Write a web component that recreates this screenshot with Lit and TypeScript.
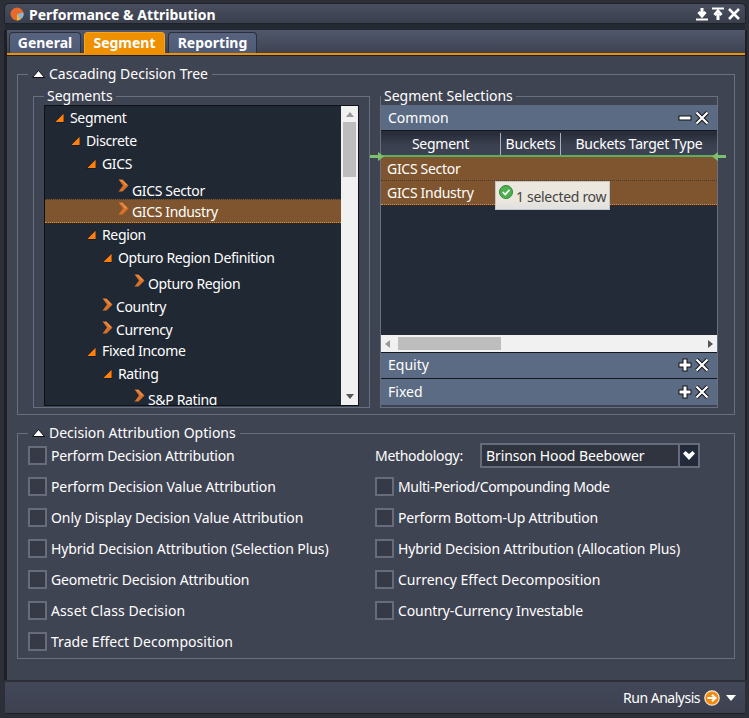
import { LitElement, html, css, svg } from "lit";
import { customElement } from "lit/decorators.js";

const tri = html`<svg class="ic" width="10" height="10" viewBox="0 0 10 10"><path d="M10 0V9.500H0Z" fill="#10151c"/><path d="M9.600 .8V8.900H1.300Z" fill="#ff7f10"/></svg>`;
const chev = html`<svg class="ic chev" width="11" height="13" viewBox="0 0 11 13"><path d="M.5 .5H4.500L10.500 6.500 4.500 12.500H.5L5 6.500Z" fill="#d9702a"/><path d="M1.500 1H4.300L9 6 7.500 6.500 4.500 2.500Z" fill="#f09a50"/></svg>`;
const legendTri = html`<svg class="lt" width="13" height="8" viewBox="0 0 13 8"><path d="M6.500 .5 12.500 7.500H.5Z" fill="#fff" stroke="#111"/></svg>`;
const glyph = (p: unknown) => html`<svg class="g" width="14" height="14" viewBox="0 0 14 14">${p}</svg>`;
const xIcon = glyph(svg`<path d="M1.500 1.500 12.500 12.500M12.500 1.500 1.500 12.500" stroke="#111" stroke-width="4"/><path d="M1.500 1.500 12.500 12.500M12.500 1.500 1.500 12.500" stroke="#fff" stroke-width="2.200"/>`);
const plusIcon = glyph(svg`<path d="M7 .5V13.500M.5 7H13.500" stroke="#111" stroke-width="5"/><path d="M7 1.500V12.500M1.500 7H12.500" stroke="#fff" stroke-width="3"/>`);
const minusIcon = glyph(svg`<path d="M.5 7H13.500" stroke="#111" stroke-width="5"/><path d="M1.500 7H12.500" stroke="#fff" stroke-width="3"/>`);

interface Row { t: string; x: number; leaf?: boolean; h: number; dy: number; sel?: boolean }
const rows: Row[] = [
  { t: "Segment", x: 9, h: 23, dy: 0 },
  { t: "Discrete", x: 25, h: 23, dy: 0 },
  { t: "GICS", x: 41, h: 24, dy: 0 },
  { t: "GICS Sector", x: 73, leaf: true, h: 23, dy: 3 },
  { t: "GICS Industry", x: 73, leaf: true, h: 24, dy: 1, sel: true },
  { t: "Region", x: 41, h: 23, dy: 0 },
  { t: "Opturo Region Definition", x: 57, h: 24, dy: 0 },
  { t: "Opturo Region", x: 89, leaf: true, h: 25, dy: 1 },
  { t: "Country", x: 57, leaf: true, h: 24, dy: 0 },
  { t: "Currency", x: 57, leaf: true, h: 22, dy: 0 },
  { t: "Fixed Income", x: 41, h: 21, dy: -1 },
  { t: "Rating", x: 57, h: 24, dy: 0 },
  { t: "S&P Rating", x: 89, leaf: true, h: 24, dy: 2 },
];
const left: [string, number][] = [["Perform Decision Attribution", -0.2], ["Perform Decision Value Attribution", -0.12], ["Only Display Decision Value Attribution", -0.1], ["Hybrid Decision Attribution (Selection Plus)", -0.09], ["Geometric Decision Attribution", -0.17], ["Asset Class Decision", 0.1], ["Trade Effect Decomposition", 0.04]];
const right: [string, number][] = [["Multi-Period/Compounding Mode", -0.35], ["Perform Bottom-Up Attribution", -0.2], ["Hybrid Decision Attribution (Allocation Plus)", -0.11], ["Currency Effect Decomposition", -0.03], ["Country-Currency Investable", -0.11]];

@customElement("app-root")
export class AppRoot extends LitElement {
  static styles = css`
    :host { display: block; width: 749px; height: 718px; background: #2c2f38; overflow: hidden;
      font-family: "Noto Sans", "DejaVu Sans", sans-serif; font-size: 14px; color: #fff; line-height: 16px; }
    * { box-sizing: border-box; }
    .win { margin: 0; padding: 3px 3px 0 4px; height: 718px; display: flex; flex-direction: column; }
    .title { height: 21px; flex: none; border: 1px solid #1f2229; border-radius: 5px 5px 0 0;
      background: linear-gradient(#4a4f60, #3a3f4d); display: flex; align-items: center; padding: 1px 3px 0 5px; font-weight: 700; }
    .title .name { margin-left: 5px; padding-top: 1px; }
    .tools { margin-left: auto; display: flex; gap: 2px; margin-right: 1px; }
    .gap { height: 6px; flex: none; background: #232931; margin: 0 1px; }
    .panel { height: 650px; flex: none; margin: 0 1px 0 3px; background: #3f4453; position: relative; display: flex; flex-direction: column; box-shadow: -3px 0 0 #1d1f24, 2px 0 0 #1d1f24; }
    .tabs { height: 25px; flex: none; display: flex; gap: 3px; padding: 2px 0 0 2px; background: linear-gradient(#51586c, #3f4453 95%); border-bottom: 2px solid #ee9000; box-shadow: 0 1px 0 #1d1f24; }
    .tab { height: 21px; border: 1px solid #2a2f3c; border-bottom: 0; border-radius: 4px 4px 0 0; background: linear-gradient(#56627e, #4f5c78); font-weight: 700; display: flex; align-items: center; justify-content: center; }
    .t1 { width: 72px; }
    .t2 { width: 81px; background: #ee9000; border-color: #f5a523; }
    .t3 { width: 89px; }
    fieldset { margin: 0; padding: 0; min-width: 0; border: 1px solid #667080; }
    legend { height: 16px; padding: 0 4px; line-height: 16px; display: flex; align-items: center; white-space: nowrap; }
    .lt { margin-right: 4px; }
    .outer { margin: 11px 10px 0 10px; height: 349px; }
    .outer > legend { margin-left: 10px; }
    .cols { display: flex; gap: 10px; padding: 6px 15px 0; }
    .segs { width: 337px; height: 320px; padding: 1px 10px 0; }
    .segs > legend { margin-left: 0; padding: 0 3px; }
    .sels { width: 338px; height: 320px; padding: 1px 0 0; }
    .sels > legend { margin-left: 0; padding: 0 3px; }
    .tree { width: 315px; height: 301px; border: 1px solid #0e1116; background: #1f2833; display: flex; overflow: hidden; letter-spacing: -0.35px; }
    .list { flex: 1; min-width: 0; overflow: hidden; }
    .row { display: flex; align-items: center; white-space: nowrap; }
    .row.sel { background: #7e552e; border-top: 1px dotted #4a3a2a; border-bottom: 1px dotted #f08a1e; }
    .row .ic { flex: none; margin-right: 6px; }
    .row .ic.chev { margin-right: 3px; margin-top: -5px; }
    .sb { width: 17px; flex: none; background: #f1f1f1; position: relative; display: flex; flex-direction: column; align-items: center; padding-top: 6px; }
    .thumb { width: 13px; height: 55px; background: #bdbdbd; margin-top: 5px; }
    .arr { width: 0; height: 0; border: 4px solid transparent; }
    .up { border-top: 0; border-bottom: 5px solid #9a9a9a; }
    .dn { border-bottom: 0; border-top: 5px solid #555; margin-top: auto; margin-bottom: 6px; }
    .bar { display: flex; align-items: center; padding: 0 8px 0 7px; background: #5b6b83; }
    .bar .g { flex: none; }
    .bar .btns { margin-left: auto; display: flex; gap: 3px; }
    .common { height: 26px; border-bottom: 1px solid #14171d; }
    .equity { height: 26px; border-top: 1px solid #14171d; padding-bottom: 2px; }
    .fixed { height: 27px; border-top: 1px solid #14171d; }
    .thead { height: 25px; display: grid; grid-template-columns: 119px 60px 1fr; background: linear-gradient(#282d3a 10%, #3b4050 55%, #3f4453); align-items: center; text-align: center; letter-spacing: -0.25px; }
    .thead div { height: 22px; line-height: 21px; }
    .thead div + div { border-left: 1px solid #aab0bc; }
    .tbody { height: 180px; background: #222b37; border-top: 2px solid #5fae5f; position: relative; margin-top: -1px; letter-spacing: -0.3px; }
    .tr { height: 24px; background: #7e552e; border-bottom: 1px dotted #4a3a2a; padding: 4px 0 0 6px; }
    .tr.last { border-bottom-color: #f08a1e; }
    .mk { position: absolute; top: -5px; }
    .tip { position: absolute; left: 114px; top: 24px; width: 115px; height: 29px; border: 1px solid #c6c6c6; background: linear-gradient(#ebe6de 70%, #dfe0e0); color: #444; display: flex; padding: 7px 0 0 20px; white-space: nowrap; letter-spacing: -0.3px; }
    .tip svg { position: absolute; left: 3px; top: 3px; }
    .hs { height: 17px; background: #f1f1f1; display: flex; align-items: center; padding: 0 4px; }
    .hs .th { width: 103px; height: 13px; background: #bdbdbd; margin-left: 8px; }
    .al { width: 0; height: 0; border: 4px solid transparent; border-left: 0; border-right: 5px solid #9a9a9a; }
    .ar { width: 0; height: 0; border: 4px solid transparent; border-right: 0; border-left: 5px solid #555; margin-left: auto; }
    .opts { margin: 10px 10px 0 10px; height: 234px; }
    .opts > legend { margin-left: 10px; }
    .grid { display: grid; grid-template-columns: 347px 1fr; padding-left: 10px; }
    .col { display: flex; flex-direction: column; }
    .cb { height: 31px; display: flex; gap: 4px; align-items: flex-start; padding-top: 5px; white-space: nowrap; }
    .cb i { width: 19px; height: 19px; flex: none; background: #353a46; border: 2px solid #666c7c; }
    .cb span { line-height: 18px; margin-top: 1px; }
    .meth { height: 31px; display: flex; padding-top: 2px; white-space: nowrap; }
    .meth label { width: 105px; padding-top: 5px; letter-spacing: -0.3px; }
    .sel-box { width: 220px; height: 25px; border: 2px solid #666c7c; background: #30343f; display: flex; align-items: center; padding-left: 4px; letter-spacing: -0.1px; }
    .sel-box span { flex: 1; }
    .sel-box b { width: 20px; height: 21px; border-left: 2px solid #666c7c; background: #232a3a; display: flex; align-items: center; justify-content: center; }
    .foot { height: 32px; flex: none; margin: 2px 1px 0 1px; background: linear-gradient(#434859, #3d4150); display: flex; align-items: center; justify-content: flex-end; padding-right: 9px; border-bottom: 1px solid #1d1f24; letter-spacing: -0.5px; }
    .foot .run { margin: 0 6px 0 4px; }
    .cap { width: 0; height: 0; border: 5px solid transparent; border-bottom: 0; border-top: 6px solid #fff; }
  `;

  render() {
    return html`<div class="win">
      <div class="title">
        <svg width="14" height="14" viewBox="0 0 14 14"><circle cx="7" cy="7" r="6.500" fill="#e8692a"/><path d="M7 7 13.400 5.500A6.500 6.500 0 0 1 10 12.700Z" fill="#8fb4cf"/><path d="M7 7 10 12.700A6.500 6.500 0 0 1 7 13.500Z" fill="#f2c230"/></svg>
        <span class="name">Performance &amp; Attribution</span>
        <div class="tools">
          ${glyph(svg`<path d="M7 1V7M3.500 5 7 9 10.500 5" stroke="#fff" stroke-width="3" fill="none"/><path d="M1 12.500H13" stroke="#fff" stroke-width="2"/>`)}
          ${glyph(svg`<path d="M1 1.500H13" stroke="#fff" stroke-width="2"/><path d="M7 13V7M3.500 8 7 4 10.500 8" stroke="#fff" stroke-width="3" fill="none"/>`)}
          ${glyph(svg`<path d="M2 2 12 12M12 2 2 12" stroke="#fff" stroke-width="2.500"/>`)}
        </div>
      </div>
      <div class="gap"></div>
      <div class="panel">
        <div class="tabs">
          <div class="tab t1">General</div><div class="tab t2">Segment</div><div class="tab t3">Reporting</div>
        </div>
        <fieldset class="outer">
          <legend>${legendTri}Cascading Decision Tree</legend>
          <div class="cols">
            <fieldset class="segs">
              <legend>Segments</legend>
              <div class="tree">
                <div class="list">
                  ${rows.map((r) => html`<div class="row ${r.sel ? "sel" : ""}" style="height:${r.h}px;padding-left:${r.x}px">
                    ${r.leaf ? chev : tri}<span style="margin-top:${r.dy * 2}px">${r.t}</span>
                  </div>`)}
                </div>
                <div class="sb"><div class="arr up"></div><div class="thumb"></div><div class="arr dn"></div></div>
              </div>
            </fieldset>
            <fieldset class="sels">
              <legend>Segment Selections</legend>
              <div class="bar common">Common<span class="btns">${minusIcon}${xIcon}</span></div>
              <div class="thead"><div>Segment</div><div>Buckets</div><div>Buckets Target Type</div></div>
              <div class="tbody">
                <svg class="mk" style="left:-11px" width="14" height="9" viewBox="0 0 14 9"><path d="M0 3H8V0L14 4.500 8 9V6H0Z" fill="#7cc06f"/></svg>
                <svg class="mk" style="right:-9px" width="14" height="9" viewBox="0 0 14 9"><path d="M14 3H6V0L0 4.500 6 9V6H14Z" fill="#7cc06f"/></svg>
                <div class="tr">GICS Sector</div>
                <div class="tr last">GICS Industry</div>
                <div class="tip">
                  <svg width="14" height="14" viewBox="0 0 14 14"><circle cx="7" cy="7" r="6.500" fill="#4fb04f" stroke="#2e8a36"/><path d="M3.800 7 6.200 9.500 10.500 4.800" stroke="#fff" stroke-width="1.800" fill="none"/></svg>
                  1 selected row
                </div>
              </div>
              <div class="hs"><div class="al"></div><div class="th"></div><div class="ar"></div></div>
              <div class="bar equity">Equity<span class="btns">${plusIcon}${xIcon}</span></div>
              <div class="bar fixed">Fixed<span class="btns">${plusIcon}${xIcon}</span></div>
            </fieldset>
          </div>
        </fieldset>
        <fieldset class="opts">
          <legend>${legendTri}Decision Attribution Options</legend>
          <div class="grid">
            <div class="col">${left.map(([t, ls]) => html`<div class="cb"><i></i><span style="letter-spacing:${ls}px">${t}</span></div>`)}</div>
            <div class="col">
              <div class="meth"><label>Methodology:</label>
                <div class="sel-box"><span>Brinson Hood Beebower</span><b><svg width="14" height="11" viewBox="0 0 14 11"><path d="M1 3.500 3.500 1 7 4 10.500 1 13 3.500 7 10Z" fill="#fff"/></svg></b></div>
              </div>
              ${right.map(([t, ls]) => html`<div class="cb"><i></i><span style="letter-spacing:${ls}px">${t}</span></div>`)}
            </div>
          </div>
        </fieldset>
      </div>
      <div class="foot">
        Run Analysis
        <svg class="run" width="16" height="16" viewBox="0 0 16 16"><circle cx="8" cy="8" r="7.200" fill="#f28a10" stroke="#f3e7d8" stroke-width="1.200"/><path d="M3.500 8H10M8 4.800 11.500 8 8 11.200" stroke="#fff" stroke-width="2" fill="none"/></svg>
        <div class="cap"></div>
      </div>
    </div>`;
  }
}
